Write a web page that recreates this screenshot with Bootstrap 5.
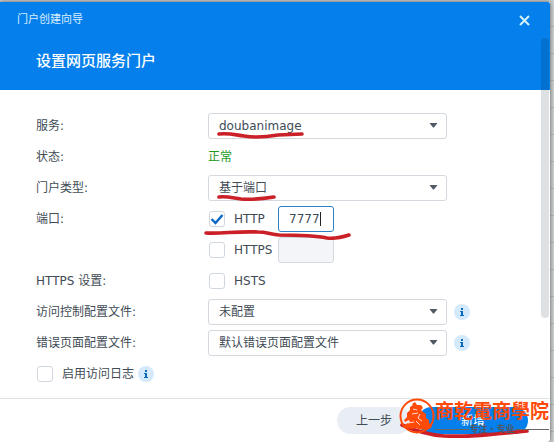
<!DOCTYPE html>
<html lang="zh-CN">
<head>
<meta charset="utf-8">
<meta name="viewport" content="width=device-width, initial-scale=1">
<title>门户创建向导</title>
<link href="https://cdn.jsdelivr.net/npm/bootstrap@5.3.0/dist/css/bootstrap.min.css" rel="stylesheet">
<style>
body { font: 12px/18px "DejaVu Sans", "Noto Sans CJK SC", sans-serif; color: #414b55;
  background: repeating-linear-gradient(#cdd0d2 0 26px, #b4b8ba 26px 27px); overflow: hidden; }
.wizard { margin: 2px 4px 0 0; background: #fff; box-shadow: 0 0 4px #555; min-height: calc(100vh - 2px); border-bottom-right-radius: 3px; }
.wizard-head { background: #057feb; color: #fff; height: 88px; border-top-right-radius: 2px; }
.caption-row { height: 36px; padding: 0 18px 0 17px; }
.caption { font-size: 11px; color: #d9efff; }
.wizard-head h1 { font-size: 15px; line-height: 20px; font-weight: 500; padding: 13px 36px 0; }
.close-x { width: 16px; height: 16px; }
.wizard-form { padding: 20px 80px 9px 36px; }
.field { display: grid; grid-template-columns: 165px minmax(0, 1fr) 16px; column-gap: 7px; align-items: center; height: 31px; }
.field-log { height: 31px; }
.form-select, .port { height: 26px; font-size: 12px; line-height: 18px; color: #414b55; border: 1px solid #d3d9df; border-radius: 3px; padding: 3px 10px; }
.form-select { padding-right: 28px; background-position: right 8px center; background-size: 9px 5px;
  background-image: url("data:image/svg+xml,%3Csvg xmlns='http://www.w3.org/2000/svg' viewBox='0 0 9 5'%3E%3Cpath d='M.5 0h8L5 4.5H4z' fill='%23505a64'/%3E%3C/svg%3E"); }
.port { width: 56px; background: #fff; }
.port:focus, .port.active { border-color: #2b80c5; outline: 0; }
.port:disabled { background: #f3f5f9; }
.caret { position: absolute; left: 112px; width: 1px; height: 14px; background: #222; }
.form-check-input.tick { width: 16px; height: 16px; margin: 0; border: 1px solid #d0d7de; border-radius: 3px; flex: none; }
.tick:checked { background-color: #fff; background-size: 14px 14px;
  background-image: url("data:image/svg+xml,%3Csvg xmlns='http://www.w3.org/2000/svg' viewBox='0 0 14 14'%3E%3Cpath d='M1.5 7l4 4 7-8' fill='none' stroke='%230a69c8' stroke-width='2.4'/%3E%3C/svg%3E"); }
.tick-row { gap: 9px; margin-left: 1px; }
.protocol { width: 69px; }
.state { color: #1c9a1c; }
.info { width: 16px; height: 16px; }
.pen { position: absolute; fill: none; stroke: #cb2028; stroke-width: 3.6; stroke-linecap: round; stroke-linejoin: round; pointer-events: none; z-index: 2; overflow: visible; }
.pen-a { left: 8px; top: 19px; }
.pen-b { left: -5px; top: 12px; }
.pen-c { right: 22px; top: 25px; }
.wizard-foot { border-top: 1px solid #dfe3e6; padding: 8px 22px 8px 0; gap: 7px; }
.wizard-foot .btn { height: 27px; border: 0; border-radius: 14px; font-size: 12px; line-height: 18px; padding: 4px 0; }
.btn-prev, .btn-prev:hover { width: 74px; background: #e9eef4; color: #414b55; }
.btn-add, .btn-add:hover { width: 110px; background: #057feb; color: #fff; }
.scroll-thumb { position: absolute; top: 36px; right: 1px; width: 8px; height: 280px; border-radius: 4px; background: rgba(0,20,40,.13); }
.seal { position: absolute; right: 1px; top: -2px; z-index: 3; color: #ff4a08; }
.seal-name { font: 700 19px/26px "Noto Sans CJK TC", sans-serif; white-space: nowrap; }
.seal-sub { font: 700 9px/12px "Noto Sans CJK SC", sans-serif; color: #4b5662; white-space: nowrap; }
.seal-sub i { flex: 1; height: 1px; background: #666; }
</style>
<script src="https://cdn.jsdelivr.net/npm/bootstrap@5.3.0/dist/js/bootstrap.bundle.min.js"></script>
</head>
<body>
<svg width="0" height="0" class="d-none"><symbol id="i" viewBox="0 0 16 16"><circle cx="8" cy="8" r="8" fill="#d4e9fb"/><path d="M7 4h2v2H7zM6 7h3v4h1v1H6v-1h1V8H6z" fill="#0869bd"/></symbol></svg>
<main class="wizard position-relative">
  <header class="wizard-head">
    <div class="d-flex justify-content-between align-items-center caption-row">
      <span class="caption">门户创建向导</span>
      <button type="button" class="close-x btn p-0 border-0 d-flex" aria-label="关闭"><svg width="16" height="16" viewBox="0 0 16 16"><path d="M4 4l9 9M13 4l-9 9" stroke="#d3f1ff" stroke-width="2"/></svg></button>
    </div>
    <h1 class="mb-0">设置网页服务门户</h1>
  </header>
  <form class="wizard-form">
    <div class="field"><label for="svc">服务:</label><div class="position-relative"><select id="svc" class="form-select"><option>doubanimage</option></select>
      <svg class="pen pen-a" width="88" height="8"><path d="M3 2c10-1 17 1 25 2 12 2 22 1 34-1l24-1"/></svg></div></div>
    <div class="field"><span>状态:</span><span class="state">正常</span></div>
    <div class="field"><label for="kind">门户类型:</label><div class="position-relative"><select id="kind" class="form-select"><option>基于端口</option></select>
      <svg class="pen pen-a" width="60" height="8"><path d="M3 3c8-1 14 1 22 2 12 1 20 0 33-2"/></svg></div></div>
    <div class="field"><span>端口:</span><div class="position-relative d-flex align-items-center"><label class="protocol tick-row d-flex align-items-center"><input type="checkbox" class="form-check-input tick" checked>HTTP</label><input class="port active" value="7777" aria-label="HTTP 端口"><span class="caret"></span>
      <svg class="pen pen-b" width="150" height="16"><path d="M3 15c16 1 30-2 52-1 8 0 12 2 21 3 18 0 34 0 48 3 9 1 16-1 22-3"/></svg></div></div>
    <div class="field"><span></span><div class="d-flex align-items-center"><label class="protocol tick-row d-flex align-items-center"><input type="checkbox" class="form-check-input tick">HTTPS</label><input class="port" disabled aria-label="HTTPS 端口"></div></div>
    <div class="field"><span>HTTPS 设置:</span><label class="tick-row d-flex align-items-center"><input type="checkbox" class="form-check-input tick">HSTS</label></div>
    <div class="field"><label for="acl">访问控制配置文件:</label><select id="acl" class="form-select"><option>未配置</option></select><svg class="info"><use href="#i"/></svg></div>
    <div class="field"><label for="err">错误页面配置文件:</label><select id="err" class="form-select"><option>默认错误页面配置文件</option></select><svg class="info"><use href="#i"/></svg></div>
    <div class="d-flex align-items-center field-log"><label class="tick-row d-flex align-items-center"><input type="checkbox" class="form-check-input tick">启用访问日志</label><svg class="info ms-1"><use href="#i"/></svg></div>
  </form>
  <footer class="wizard-foot d-flex justify-content-end position-relative">
    <button type="button" class="btn btn-prev">上一步</button>
    <button type="button" class="btn btn-add">新增</button>
    <svg class="pen pen-c" width="128" height="14"><path d="M2 1c14 6 26 10 42 11 24 1 46-1 83-5"/></svg>
    <div class="seal d-flex">
      <svg width="37" height="40" viewBox="0 0 37 40"><circle cx="19" cy="19" r="16.500" fill="none" stroke="#ff4a08" stroke-width="2"/><path fill="#ff4a08" d="M14 7l3-2 2 3 4 0 2 3-2 2 2 2 3 2 0 4 3 2 0 3 3 2-1 3-5 2-8-1-2-1-5 1-7-2 2-3 4-2-1-2-4 2-1-2 3-3 0-4 3-3 0-3 3-2z"/><path d="M15 12l4 1M14 17l6-1M22 17l-2 4 4 3M10 26l6-1M18 24l4 4" fill="none" stroke="#fff" stroke-width=".8"/></svg>
      <div><div class="seal-name">商乾電商學院</div><div class="seal-sub d-flex align-items-center"><i></i><span>专注·专业</span><i></i></div></div>
    </div>
  </footer>
  <div class="scroll-thumb"></div>
</main>
</body>
</html>
